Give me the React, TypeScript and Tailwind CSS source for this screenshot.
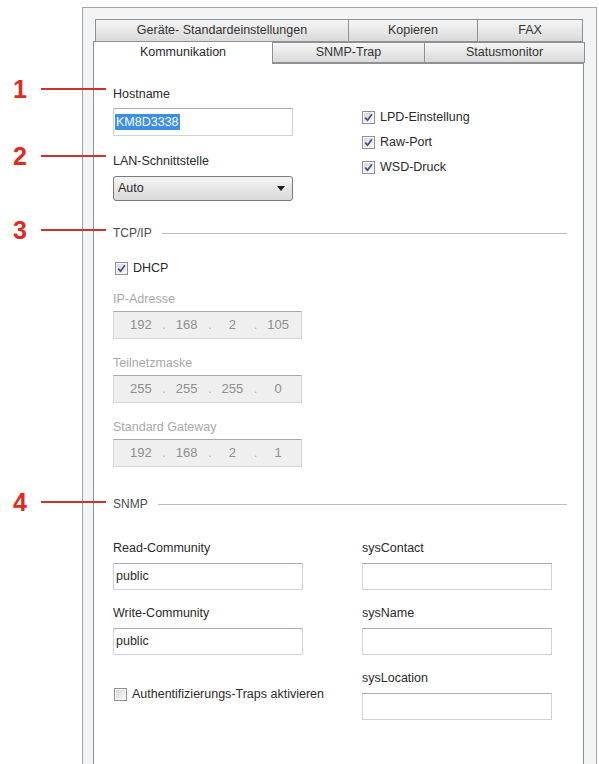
import React from "react";

function Check({ checked }: { checked: boolean }) {
  return (
    <span className="w-[13px] h-[13px] shrink-0 border border-[#8f8f8f] bg-white p-px flex">
      <span className="flex-1 flex items-center justify-center bg-gradient-to-br from-[#d3d6db] to-[#f7f8fa]">
        {checked && (
          <svg width="9" height="9" viewBox="0 0 9 9">
            <path d="M1.2 4.6 L3.6 7.2 L7.9 1.3" stroke="#3f4f80" strokeWidth="1.7" fill="none" />
          </svg>
        )}
      </span>
    </span>
  );
}

function CheckRow({ checked, label, className = "" }: { checked: boolean; label: string; className?: string }) {
  return (
    <div className={"flex items-center gap-[5px] h-[16px] whitespace-nowrap " + className}>
      <Check checked={checked} />
      <span className="text-[#2a2a2a]">{label}</span>
    </div>
  );
}

function Label({ children, className = "" }: { children: React.ReactNode; className?: string }) {
  return <div className={"h-[16px] leading-[16px] whitespace-nowrap " + className}>{children}</div>;
}

function TextBox({ value, className = "" }: { value?: string; className?: string }) {
  return (
    <div
      className={
        "h-[27px] border border-[#cfd3d8] border-t-[#a9acb2] bg-white flex items-center px-[2px] text-[#2a2a2a] " +
        className
      }
    >
      {value}
    </div>
  );
}

function IpBox({ parts, className = "" }: { parts: string[]; className?: string }) {
  return (
    <div
      className={
        "w-[189px] h-[28px] border border-[#d4d4d4] border-t-[#a8a8a8] bg-[#efefef] flex items-center pl-[4px] text-[13px] text-[#8e8e8e] " +
        className
      }
    >
      {parts.map((p, i) => (
        <div key={i} className="w-[46px] relative flex justify-center">
          <span>{p}</span>
          {i < 3 && <span className="absolute right-[-2px] top-0 text-[#b5b5b5]">.</span>}
        </div>
      ))}
    </div>
  );
}

function GroupHeader({ label, className = "" }: { label: string; className?: string }) {
  return (
    <div className={"flex items-center h-[16px] " + className}>
      <span className="text-[#4a4a4a] text-[12px]">{label}</span>
      <div className="flex-1 ml-[10px] h-px bg-[#b9bcc0]" />
    </div>
  );
}

function BackTab({ w, children }: { w: string; children: React.ReactNode }) {
  return (
    <div
      className={
        w +
        " h-full border border-[#8e9096] -ml-px first:ml-0 bg-gradient-to-b from-[#f6f6f6] to-[#dadada] flex items-center justify-center text-[#333]"
      }
    >
      {children}
    </div>
  );
}

function Callout({ n, top }: { n: string; top: string }) {
  return (
    <div className={"absolute left-0 flex items-center " + top}>
      <span className="w-[27px] text-right text-[25px] leading-[26px] font-bold text-[#e02a20] font-['Liberation_Sans',Arial,sans-serif]">
        {n}
      </span>
      <span className="ml-[14px] w-[65px] h-[2px] bg-[#c9342c]" />
    </div>
  );
}

export default function App() {
  return (
    <div className="relative w-[599px] h-[764px] overflow-hidden bg-white text-[12.5px] text-[#2a2a2a] font-['Liberation_Sans',Arial,sans-serif]">
      <Callout n="1" top="top-[76px]" />
      <Callout n="2" top="top-[143px]" />
      <Callout n="3" top="top-[217px]" />
      <Callout n="4" top="top-[489px]" />

      <div className="ml-[82px] mt-[7px] w-[515px] h-[790px] border border-[#a3a5a9] bg-[#f3f4f6] pl-[10px] pt-[11px]">
        {/* tab row 1 */}
        <div className="pl-[2px] h-[23px] flex">
          <BackTab w="w-[254px]">Geräte- Standardeinstellungen</BackTab>
          <BackTab w="w-[130px]">Kopieren</BackTab>
          <BackTab w="w-[106px]">FAX</BackTab>
        </div>
        {/* tab row 2 */}
        <div className="-mt-[2px] h-[23px] flex items-end relative z-10">
          <div className="w-[180px] h-[23px] border border-b-0 border-[#8e9096] bg-white -mb-px flex items-center justify-center pb-[2px]">
            Kommunikation
          </div>
          <div className="w-[153px] h-[21px] -ml-px border border-[#8e9096] bg-gradient-to-b from-[#f6f6f6] to-[#dadada] flex items-center justify-center text-[#333]">
            SNMP-Trap
          </div>
          <div className="w-[161px] h-[21px] -ml-px border border-[#8e9096] bg-gradient-to-b from-[#f6f6f6] to-[#dadada] flex items-center justify-center text-[#333]">
            Statusmonitor
          </div>
        </div>
        {/* panel */}
        <div className="w-[491px] h-[740px] border border-[#8e9096] bg-white pl-[19px] pr-[16px]">
          <div className="flex">
            <div className="w-[180px] flex flex-col">
              <Label className="mt-[22px]">Hostname</Label>
              <div className="mt-[6px] h-[28px] border border-[#cfd3d8] border-t-[#a9acb2] bg-white flex items-center pl-px">
                <span className="bg-[#3d8ee6] text-white px-px leading-[16px]">KM8D3338</span>
              </div>
              <Label className="mt-[17px]">LAN-Schnittstelle</Label>
              <div className="mt-[7px] h-[25px] rounded-[3px] border border-[#7b7b7b] bg-gradient-to-b from-[#f4f4f4] to-[#d9d9d9] flex items-center justify-between pl-[4px] pr-[7px]">
                <span>Auto</span>
                <svg width="8" height="5" viewBox="0 0 8 5">
                  <path d="M0 0 H8 L4 5 Z" fill="#1e1e1e" />
                </svg>
              </div>
            </div>
            <div className="ml-[69px] flex flex-col pt-[45px] gap-[9px]">
              <CheckRow checked label="LPD-Einstellung" />
              <CheckRow checked label="Raw-Port" />
              <CheckRow checked label="WSD-Druck" />
            </div>
          </div>

          <GroupHeader label="TCP/IP" className="mt-[24px]" />
          <CheckRow checked label="DHCP" className="mt-[19px] ml-[2px]" />

          <Label className="mt-[15px] text-[#a8a8a8]">IP-Adresse</Label>
          <IpBox parts={["192", "168", "2", "105"]} className="mt-[4px]" />
          <Label className="mt-[16px] text-[#a8a8a8]">Teilnetzmaske</Label>
          <IpBox parts={["255", "255", "255", "0"]} className="mt-[4px]" />
          <Label className="mt-[16px] text-[#a8a8a8]">Standard Gateway</Label>
          <IpBox parts={["192", "168", "2", "1"]} className="mt-[4px]" />

          <GroupHeader label="SNMP" className="mt-[29px]" />

          <div className="flex mt-[28px]">
            <div className="w-[190px] flex flex-col">
              <Label>Read-Community</Label>
              <TextBox value="public" className="mt-[7px]" />
              <Label className="mt-[15px]">Write-Community</Label>
              <TextBox value="public" className="mt-[7px]" />
              <CheckRow checked={false} label="Authentifizierungs-Traps aktivieren" className="mt-[31px] ml-px" />
            </div>
            <div className="ml-[59px] w-[190px] flex flex-col">
              <Label>sysContact</Label>
              <TextBox className="mt-[7px]" />
              <Label className="mt-[15px]">sysName</Label>
              <TextBox className="mt-[7px]" />
              <Label className="mt-[15px]">sysLocation</Label>
              <TextBox className="mt-[7px]" />
            </div>
          </div>
        </div>
      </div>
    </div>
  );
}
